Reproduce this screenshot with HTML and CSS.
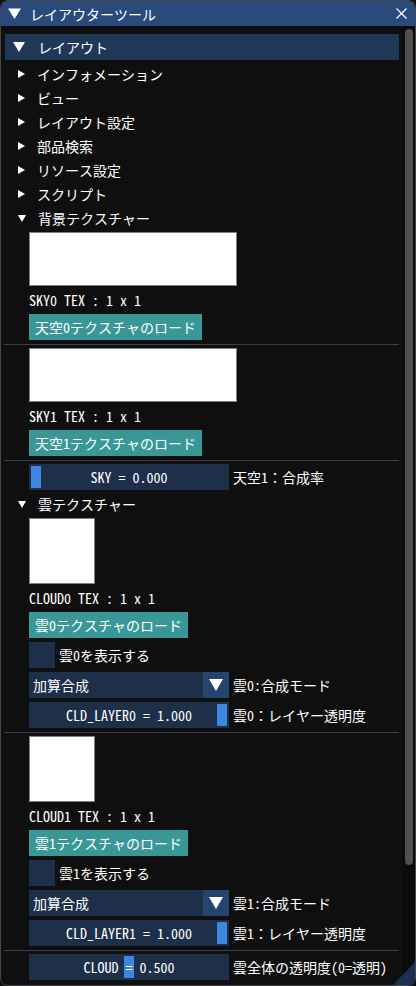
FILE: index.html
```html
<!DOCTYPE html>
<html lang="ja">
<head>
    <meta charset="UTF-8">
    <meta name="viewport" content="width=device-width, initial-scale=1.0">
    <title>レイアウターツール</title>
    <link rel="stylesheet" href="styles.css">
</head>
<body>
    <div class="window">
        <div class="titlebar">
            <svg class="title-arrow" width="13" height="11" viewBox="0 0 13 11"><path d="M0 0.5H13L6.5 11Z" fill="#fff"/></svg>
            <span class="title">レイアウターツール</span>
            <svg class="close" width="11" height="11" viewBox="0 0 11 11"><path d="M0.5 0.5L10.5 10.5M10.5 0.5L0.5 10.5" stroke="#fff" stroke-width="1.2"/></svg>
        </div>
        <div class="body">
            <div class="content">
                <div class="header">
                    <svg width="12" height="10" viewBox="0 0 12 10"><path d="M0 0H12L6 10Z" fill="#fff"/></svg>
                    <span class="header-label">レイアウト</span>
                </div>
                <div class="node"><svg width="7" height="8" viewBox="0 0 7 8"><path d="M0 0L7 4L0 8Z" fill="#fff"/></svg><span>インフォメーション</span></div>
                <div class="node"><svg width="7" height="8" viewBox="0 0 7 8"><path d="M0 0L7 4L0 8Z" fill="#fff"/></svg><span>ビュー</span></div>
                <div class="node"><svg width="7" height="8" viewBox="0 0 7 8"><path d="M0 0L7 4L0 8Z" fill="#fff"/></svg><span>レイアウト設定</span></div>
                <div class="node"><svg width="7" height="8" viewBox="0 0 7 8"><path d="M0 0L7 4L0 8Z" fill="#fff"/></svg><span>部品検索</span></div>
                <div class="node"><svg width="7" height="8" viewBox="0 0 7 8"><path d="M0 0L7 4L0 8Z" fill="#fff"/></svg><span>リソース設定</span></div>
                <div class="node"><svg width="7" height="8" viewBox="0 0 7 8"><path d="M0 0L7 4L0 8Z" fill="#fff"/></svg><span>スクリプト</span></div>
                <div class="node"><svg width="8" height="7" viewBox="0 0 8 7"><path d="M0 0H8L4 7Z" fill="#fff"/></svg><span>背景テクスチャー</span></div>

                <div class="image wide"></div>
                <div class="line">SKY0 TEX : 1 x 1</div>
                <button class="btn">天空0テクスチャのロード</button>
                <div class="sep"></div>

                <div class="image wide"></div>
                <div class="line">SKY1 TEX : 1 x 1</div>
                <button class="btn">天空1テクスチャのロード</button>
                <div class="sep"></div>

                <div class="row">
                    <div class="slider"><div class="grab" style="left: 2px"></div><span class="slider-text">SKY = 0.000</span></div>
                    <span class="label">天空1：合成率</span>
                </div>

                <div class="node"><svg width="8" height="7" viewBox="0 0 8 7"><path d="M0 0H8L4 7Z" fill="#fff"/></svg><span>雲テクスチャー</span></div>

                <div class="image square"></div>
                <div class="line">CLOUD0 TEX : 1 x 1</div>
                <button class="btn">雲0テクスチャのロード</button>
                <div class="row">
                    <div class="checkbox"></div>
                    <span class="label">雲0を表示する</span>
                </div>
                <div class="row">
                    <div class="combo"><span class="combo-text">加算合成</span><span class="combo-arrow"><svg width="14" height="12" viewBox="0 0 14 12"><path d="M0 0H14L7 12Z" fill="#fff"/></svg></span></div>
                    <span class="label">雲0:合成モード</span>
                </div>
                <div class="row">
                    <div class="slider"><div class="grab" style="left: 188px"></div><span class="slider-text">CLD_LAYER0 = 1.000</span></div>
                    <span class="label">雲0：レイヤー透明度</span>
                </div>
                <div class="sep"></div>

                <div class="image square"></div>
                <div class="line">CLOUD1 TEX : 1 x 1</div>
                <button class="btn">雲1テクスチャのロード</button>
                <div class="row">
                    <div class="checkbox"></div>
                    <span class="label">雲1を表示する</span>
                </div>
                <div class="row">
                    <div class="combo"><span class="combo-text">加算合成</span><span class="combo-arrow"><svg width="14" height="12" viewBox="0 0 14 12"><path d="M0 0H14L7 12Z" fill="#fff"/></svg></span></div>
                    <span class="label">雲1:合成モード</span>
                </div>
                <div class="row">
                    <div class="slider"><div class="grab" style="left: 188px"></div><span class="slider-text">CLD_LAYER1 = 1.000</span></div>
                    <span class="label">雲1：レイヤー透明度</span>
                </div>
                <div class="sep"></div>

                <div class="row">
                    <div class="slider"><div class="grab" style="left: 95px"></div><span class="slider-text">CLOUD = 0.500</span></div>
                    <span class="label">雲全体の透明度(0=透明)</span>
                </div>
            </div>
            <div class="scrollbar"><div class="scroll-grab"></div></div>
        </div>
        <div class="grip"></div>
    </div>
</body>
</html>
```

FILE: styles.css
```css
* { box-sizing: border-box; }
body { margin: 0; background: #101010; }
.window { position: relative; width: 416px; height: 986px; display: flex; flex-direction: column; overflow: hidden; background: #0f0f0f; border: 1px solid #45454e; border-radius: 8px; color: #fff; font-family: "Noto Sans Mono CJK JP", "Noto Sans CJK JP", monospace; font-size: 14px; }
.titlebar { height: 25px; flex: none; display: flex; align-items: center; padding: 0 7px 0 7px; background: #294a7a; }
.title { margin-left: 9px; flex: 1; }
.close { margin-right: 1px; }
.body { flex: 1; display: flex; min-height: 0; }
.content { flex: 1; display: flex; flex-direction: column; gap: 4px; padding: 8px 4px 0 4px; }
.header { height: 26px; display: flex; align-items: center; padding-left: 8px; background: #203858; }
.header-label { margin-left: 13px; }
.node { height: 20px; display: flex; align-items: center; padding-left: 13px; }
.node span { margin-left: 12px; }
.node svg { flex: none; }
.image { margin-left: 24px; background: #fff; border: 1px solid #808080; }
.image.wide { width: 208px; height: 54px; }
.image.square { width: 66px; height: 66px; }
.line { height: 20px; line-height: 20px; margin-left: 24px; }
.btn { align-self: flex-start; margin-left: 24px; height: 26px; padding: 0 6px; border: none; background: #3a9797; color: #fff; font: inherit; }
.sep { height: 1px; margin: 0 0 -1px -1px; background: #3e3e47; }
.row { display: flex; align-items: center; margin-left: 24px; }
.label { margin-left: 4px; white-space: nowrap; }
.slider { position: relative; width: 200px; height: 26px; display: flex; align-items: center; justify-content: center; background: #1d2f49; }
.grab { position: absolute; top: 2px; bottom: 2px; width: 10px; background: #3d86e2; }
.slider-text { position: relative; }
.checkbox { width: 26px; height: 26px; background: #1d2f49; }
.combo { width: 200px; height: 26px; display: flex; align-items: center; background: #1d2f49; }
.combo-text { flex: 1; padding-left: 4px; }
.combo-arrow { width: 26px; height: 26px; display: flex; align-items: center; justify-content: center; background: #24456d; }
.scrollbar { width: 12px; flex: none; padding: 3px 2px; background: #0a0a0a; }
.scroll-grab { height: 836px; border-radius: 4px; background: #4f4f4f; }
.grip { position: absolute; right: 0; bottom: 0; width: 22px; height: 23px; background: #1c3150; clip-path: polygon(100% 0, 100% 100%, 0 100%); }
```
